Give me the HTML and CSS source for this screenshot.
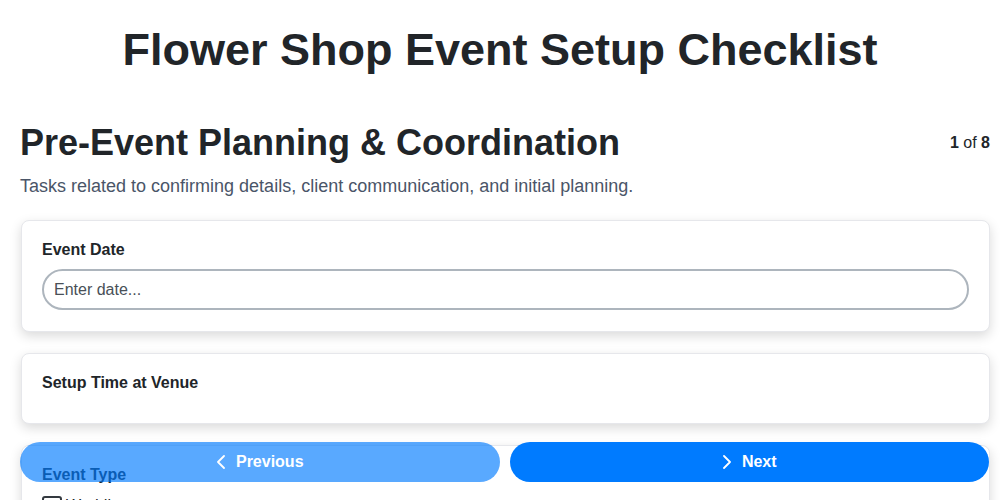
FILE: index.html
```html
<!DOCTYPE html>
<html lang="en">
<head>
<meta charset="utf-8">
<title>Flower Shop Event Setup Checklist</title>
<link rel="stylesheet" href="styles.css">
</head>
<body>
<h1 class="title">Flower Shop Event Setup Checklist</h1>
<main class="page">
  <div class="section-head">
    <h2 class="section-title">Pre-Event Planning &amp; Coordination</h2>
    <div class="counter"><b>1</b> of <b>8</b></div>
  </div>
  <p class="section-desc">Tasks related to confirming details, client communication, and initial planning.</p>

  <div class="card">
    <label class="field-label" for="event-date">Event Date</label>
    <input class="text-input" id="event-date" type="text" placeholder="Enter date...">
  </div>

  <div class="card card-empty">
    <div class="field-label">Setup Time at Venue</div>
  </div>

  <div class="card">
    <div class="field-label">Event Type</div>
    <label class="check"><span class="box"></span>Wedding</label>
    <label class="check"><span class="box"></span>Corporate</label>
    <label class="check"><span class="box"></span>Birthday</label>
  </div>
</main>

<nav class="nav">
  <button class="btn btn-prev" disabled>
    <svg width="10" height="14" viewBox="0 0 10 14"><path d="M8 1 L2 7 L8 13" fill="none" stroke="#fff" stroke-width="1.8" stroke-linecap="round" stroke-linejoin="round"/></svg>
    Previous
  </button>
  <button class="btn btn-next">
    <svg width="10" height="14" viewBox="0 0 10 14"><path d="M2 1 L8 7 L2 13" fill="none" stroke="#fff" stroke-width="1.8" stroke-linecap="round" stroke-linejoin="round"/></svg>
    Next
  </button>
</nav>
</body>
</html>
```

FILE: styles.css
```css
html, body {
  margin: 0;
  background: #fff;
}
body {
  font-family: "Liberation Sans", Arial, sans-serif;
  color: #212529;
}
.title {
  margin: 23px 0 0;
  font-size: 45px;
  line-height: 54px;
  text-align: center;
  font-weight: bold;
}
.page {
  padding: 0 10px 40px 20px;
}
.section-head {
  display: flex;
  justify-content: space-between;
  align-items: center;
  margin-top: 44px;
}
.section-title {
  margin: 0;
  font-size: 36px;
  line-height: 44px;
  font-weight: bold;
}
.counter {
  font-size: 16px;
  color: #212529;
}
.section-desc {
  margin: 9px 0 22px;
  font-size: 18px;
  line-height: 24px;
  color: #4a5568;
}
.card {
  background: #fff;
  border: 1px solid #e6e7eb;
  border-radius: 8px;
  padding: 20px 20px 21px;
  margin: 0 0 21px 1px;
  box-shadow: 0 4px 12px rgba(0, 0, 0, 0.15);
}
.card-empty {
  min-height: 28px;
}
.field-label {
  display: block;
  font-size: 16px;
  line-height: 18px;
  font-weight: bold;
  margin-bottom: 10px;
}
.text-input {
  display: block;
  width: 100%;
  box-sizing: border-box;
  height: 41px;
  border: 2px solid #adb5bd;
  border-radius: 21px;
  padding: 0 10px;
  font-family: inherit;
  font-size: 16px;
  color: #212529;
  outline: none;
}
.text-input::placeholder {
  color: #495057;
}
.check {
  display: flex;
  align-items: center;
  gap: 4px;
  font-size: 16px;
  line-height: 24px;
}
.box {
  width: 16px;
  height: 16px;
  border: 2px solid #343a40;
  border-radius: 3px;
}
.nav {
  position: fixed;
  left: 20px;
  right: 11px;
  bottom: 18px;
  display: flex;
  gap: 10px;
}
.btn {
  flex: 1;
  height: 40px;
  border: none;
  border-radius: 20px;
  background: #007bff;
  color: #fff;
  font-family: inherit;
  font-size: 16px;
  font-weight: bold;
  display: flex;
  align-items: center;
  justify-content: center;
  gap: 10px;
  cursor: pointer;
}
.btn-prev {
  opacity: 0.65;
  cursor: default;
}
```
